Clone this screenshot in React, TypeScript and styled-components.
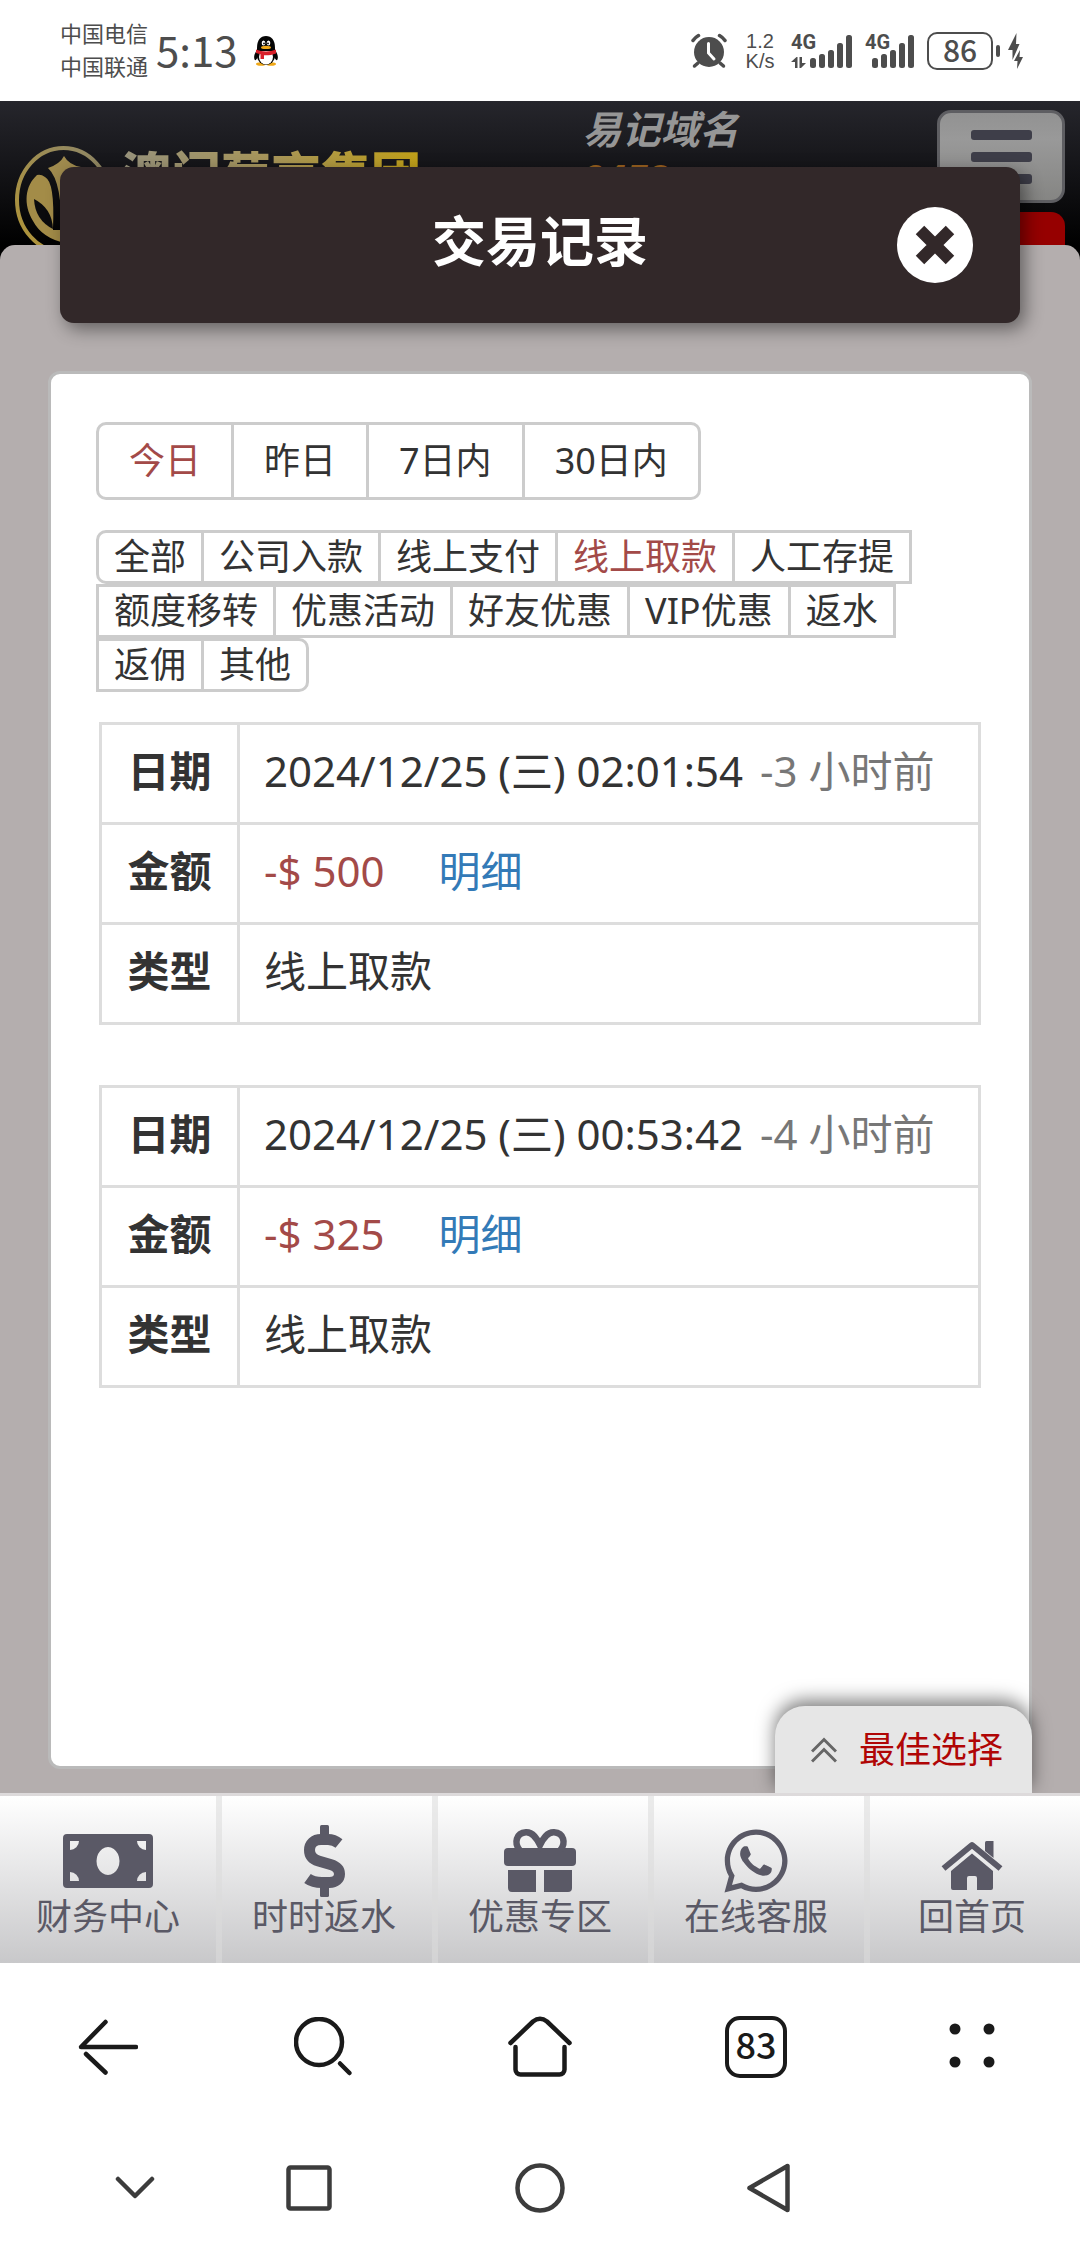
import React, { useState } from 'react';
import styled, { createGlobalStyle } from 'styled-components';
import { FaWhatsapp } from 'react-icons/fa';

const CJK = '"Noto Sans CJK SC", sans-serif';

const GlobalStyle = createGlobalStyle`
  *, *::before, *::after { box-sizing: border-box; }
  body {
    margin: 0;
    background: #fff;
    color: #333;
    font-family: "Noto Sans", ${CJK};
  }
  button { font: inherit; color: inherit; border: 0; padding: 0; margin: 0; background: none; cursor: pointer; }
  a { color: inherit; text-decoration: none; }
  svg { display: block; }
`;

const Screen = styled.div`
  display: flex;
  flex-direction: column;
  min-height: 100vh;
`;

/* ---------- status bar ---------- */

const StatusBar = styled.header`
  display: flex;
  align-items: center;
  justify-content: space-between;
  height: 101px;
  padding: 0 57px 0 60px;
  color: #4d4d4d;
  font-family: ${CJK};
`;

const StatusGroup = styled.div`
  display: flex;
  align-items: center;
  gap: 8px;
`;

const Carriers = styled.div`
  padding-bottom: 4px;
  font-size: 22px;
  line-height: 33px;
`;

const Clock = styled.time`
  padding-bottom: 4px;
  font-size: 42px;
  line-height: 48px;
`;

const Penguin = styled.svg`
  margin-left: 8px;
`;

const Speed = styled.div`
  width: 40px;
  font-family: "Liberation Sans", sans-serif;
  font-size: 20px;
  line-height: 20px;
`;

const SpeedLine = styled.div`
  width: 34px;
  text-align: center;
`;

const Signal = styled.div`
  display: grid;
  height: 34px;
  > * { grid-area: 1 / 1; }
`;

const SignalLabel = styled.span`
  font-family: Roboto, sans-serif;
  font-size: 20px;
  font-weight: 700;
  line-height: 16px;
`;

const Battery = styled.div`
  display: flex;
  align-items: center;
  gap: 3px;
`;

const BatteryBody = styled.span`
  width: 66px;
  height: 38px;
  border: 2px solid #4d4d4d;
  border-radius: 10px;
  font-size: 30px;
  font-weight: 500;
  line-height: 30px;
  text-align: center;
`;

const BatteryNub = styled.i`
  width: 4px;
  height: 12px;
  border-radius: 2px;
  background: #4d4d4d;
`;

/* ---------- page under the dialog ---------- */

const Page = styled.main`
  position: relative;
  flex: 1;
  display: grid;
  > * { grid-area: 1 / 1; min-width: 0; }
`;

const Backdrop = styled.div`
  display: flex;
  flex-direction: column;
  background: #000;
`;

const SiteHeader = styled.div`
  display: grid;
  grid-template-columns: 8fr 5fr 128px;
  height: 144px;
  padding: 0 15px;
  overflow: hidden;
  background: linear-gradient(#26262c, #17171b 40%, #000);
`;

const Sheet = styled.div`
  flex: 1;
  border-radius: 15px 15px 0 0;
  background: #b4aeae;
`;

const Brand = styled.div`
  display: flex;
  gap: 9px;
  padding-top: 45px;
`;

const BrandName = styled.span`
  font-family: ${CJK};
  font-size: 50px;
  font-weight: 900;
  line-height: 52px;
  color: transparent;
  background: linear-gradient(90deg, #98937c, #a8965a 50%, #c0a018);
  background-clip: text;
  -webkit-background-clip: text;
  white-space: nowrap;
`;

const Domain = styled.div`
  display: flex;
  flex-direction: column;
  gap: 8px;
  padding-top: 10px;
  font-family: "Liberation Sans", ${CJK};
  font-size: 39px;
  font-weight: 700;
  font-style: italic;
  line-height: 40px;
  color: #969696;
`;

const DomainNumber = styled.span`
  color: #98601f;
`;

const HeaderActions = styled.div`
  display: flex;
  flex-direction: column;
  gap: 9px;
  padding-top: 9px;
`;

const MenuButton = styled.button`
  display: flex;
  flex: none;
  flex-direction: column;
  align-items: center;
  justify-content: center;
  gap: 12px;
  height: 93px;
  border: 3px solid #5e5e62;
  border-radius: 14px;
  background: linear-gradient(#929292, #999 30%, #858583);
`;

const MenuBar = styled.i`
  width: 61px;
  height: 10px;
  border-radius: 3px;
  background: #3e3e49;
`;

const AccountButton = styled.button`
  flex: none;
  height: 70px;
  border-radius: 14px;
  background: #960000;
`;

/* ---------- dialog ---------- */

const Dialog = styled.section`
  display: flex;
  flex-direction: column;
  gap: 48px;
  padding: 66px 48px 24px;
`;

const DialogHeader = styled.div`
  display: grid;
  grid-template-columns: 1fr auto 1fr;
  align-items: center;
  height: 156px;
  margin: 0 12px;
  padding: 0 47px;
  border-radius: 14px;
  background: #322829;
  box-shadow: 5px 6px 18px rgba(0, 0, 0, 0.45);
`;

const DialogTitle = styled.h1`
  grid-column: 2;
  margin: 0;
  padding-bottom: 8px;
  font-size: 54px;
  font-weight: 700;
  line-height: 72px;
  color: #fff;
`;

const CloseButton = styled.button`
  justify-self: end;
  width: 76px;
  height: 76px;
  border-radius: 50%;
  background: #fff;
`;

const Panel = styled.div`
  flex: 1;
  display: flex;
  flex-direction: column;
  align-items: stretch;
  gap: 30px;
  padding: 48px 45px;
  border: 3px solid #bababa;
  border-radius: 12px;
  background: #fff;
`;

const Tabs = styled.div`
  display: flex;
  flex-wrap: wrap;
  padding-right: 3px;
`;

const Tab = styled.button<{ $active: boolean; $size: 'large' | 'small' }>`
  margin-right: -3px;
  padding: 0 ${(p) => (p.$size === 'large' ? 30 : 15)}px;
  border: 3px solid #ccc;
  font-size: 36px;
  line-height: ${(p) => (p.$size === 'large' ? 72 : 48)}px;
  white-space: nowrap;
  color: ${(p) => (p.$active ? '#a34a48' : '#333')};
  &:first-child { border-radius: 10px 0 0 10px; }
  &:last-child { border-radius: 0 10px 10px 0; }
`;

const Records = styled.div`
  display: flex;
  flex-direction: column;
  gap: 60px;
  padding: 0 3px;
`;

const RecordTable = styled.table`
  width: 100%;
  border-collapse: collapse;
  font-size: 42px;
  line-height: 60px;
`;

const Label = styled.th`
  width: 138px;
  padding: 16px 0 21px;
  border: 3px solid #ddd;
  font-weight: 700;
  text-align: center;
`;

const Value = styled.td`
  padding: 16px 0 21px 24px;
  border: 3px solid #ddd;
  white-space: nowrap;
`;

const Ago = styled.span`
  margin-left: 6px;
  color: #777;
`;

const Amount = styled.span`
  margin-right: 54px;
  color: #a34a48;
`;

const DetailLink = styled.a`
  color: #337ab7;
`;

const BestChoice = styled.button`
  position: absolute;
  right: 48px;
  bottom: 0;
  display: flex;
  align-items: center;
  gap: 22px;
  height: 87px;
  padding: 0 29px 0 36px;
  border-radius: 30px 30px 0 0;
  background: #e6e6e6;
  box-shadow: 0 -6px 18px rgba(0, 0, 0, 0.5);
  clip-path: inset(-30px -30px 0 -30px);
  color: #b00505;
  font-size: 36px;
  line-height: 48px;
`;

/* ---------- site navigation ---------- */

const SiteNav = styled.nav`
  display: grid;
  grid-template-columns: repeat(5, 1fr);
  height: 170px;
  border-top: 3px solid #dddadb;
  background: linear-gradient(#fff, #c8c8ca);
`;

const SiteNavItem = styled.a`
  display: flex;
  flex-direction: column;
  align-items: center;
  padding-top: 29px;
  color: #5a5966;
  font-size: 36px;
  line-height: 40px;
  & + & { box-shadow: inset 6px 0 0 rgba(220, 220, 220, 0.56); }
`;

/* ---------- browser and system bars ---------- */

const BrowserBar = styled.nav`
  display: grid;
  grid-template-columns: repeat(5, 1fr);
  place-items: center;
  height: 168px;
  color: #1a1a1a;
`;

const TabCount = styled.span`
  display: block;
  width: 62px;
  height: 62px;
  border: 4px solid #1a1a1a;
  border-radius: 15px;
  font-family: ${CJK};
  font-size: 36px;
  font-weight: 500;
  line-height: 46px;
  text-align: center;
`;

const SystemBar = styled.nav`
  display: grid;
  grid-template-columns: 8fr 29fr 29fr 48fr 28fr 38fr;
  place-items: center;
  height: 113px;
  color: #3c3c3c;
  > :first-child { grid-column-start: 2; }
`;

/* ---------- drawings ---------- */

const QQIcon = () => (
  <Penguin width="24" height="30" viewBox="0 0 24 30" role="img" aria-label="QQ">
    <ellipse cx="7" cy="28" rx="5" ry="1.8" fill="#f0a818" />
    <ellipse cx="17" cy="28" rx="5" ry="1.8" fill="#f0a818" />
    <path d="M3 14C0 18-.5 22 .8 24c1 .6 2-1 2.700-2.500h17C21.200 23 22.200 24.600 23.200 24c1.300-2 .8-6-2.200-10z" fill="#050505" />
    <ellipse cx="12" cy="20" rx="9" ry="9" fill="#050505" />
    <ellipse cx="12" cy="21" rx="7" ry="7.400" fill="#fff" />
    <path d="M3 12C3 4 6.500 0 12 0s9 4 9 12v3H3z" fill="#050505" />
    <path d="M2 13.500c6 2.600 14 2.600 20 0v4c-4 1.500-8 2-12 1.800V23H6.500v-4.800L2 17z" fill="#d8202a" />
    <ellipse cx="9.500" cy="7" rx="1.800" ry="2.600" fill="#fff" />
    <ellipse cx="14.500" cy="7" rx="1.800" ry="2.600" fill="#fff" />
    <circle cx="10" cy="7.400" r="0.900" />
    <circle cx="14" cy="7.400" r="0.900" />
    <ellipse cx="12" cy="11.400" rx="5" ry="1.700" fill="#f0a818" />
  </Penguin>
);

const AlarmIcon = () => (
  <svg width="44" height="36" viewBox="0 0 44 36" fill="none" stroke="currentColor" strokeLinecap="round">
    <circle cx="18" cy="19" r="15" fill="currentColor" stroke="none" />
    <path d="M2 7.500Q4 4.500 7.500 2.500M34 7.500Q32 4.500 28.500 2.500" strokeWidth="3.500" />
    <path d="M7 30l-3.500 3M29 30l3.500 3" strokeWidth="3.500" />
    <path d="M17.500 10.500v9.500l5.500 6" stroke="#fff" strokeWidth="3" />
  </svg>
);

const barHeights = [10, 14, 18, 25, 33];

const SignalBars = ({ width, start, arrows }: { width: number; start: number; arrows?: boolean }) => (
  <svg width={width} height="34" viewBox={`0 0 ${width} 34`} fill="currentColor">
    {barHeights.map((h, i) => (
      <rect key={h} x={start + i * 9} y={34 - h} width="6" height={h} rx="2.500" />
    ))}
    {arrows && <path d="M4 34V28H0l5.500-5H6.500V34zM8.500 23H11v6h4l-5 5H8.500z" />}
  </svg>
);

const BoltIcon = () => (
  <svg width="15" height="36" viewBox="0 0 15 36" fill="currentColor">
    <path d="M8.500 0L0 17h4.500L4.500 27 11.500 11H8z" />
    <path d="M12 17L6 28h3.500l-.5 8 6-12h-3.500z" />
  </svg>
);

const BrandMark = () => (
  <svg width="97" height="108" viewBox="0 0 97 108">
    <defs>
      <linearGradient id="gold" x1="1" y1="0" x2="0" y2="1">
        <stop offset="0" stopColor="#8d866a" />
        <stop offset="1" stopColor="#b29535" />
      </linearGradient>
    </defs>
    <ellipse cx="48.500" cy="54" rx="46.500" ry="52" fill="none" stroke="url(#gold)" strokeWidth="4" />
    <path d="M49 10Q54 19 66 21L60 40 60 90H46Q48 36 33 22 45 18 49 10z" fill="#a08b4e" />
    <path d="M22 29C10 40 8 58 18 75Q27 92 50 97V84H38V82Q40 36 30 31 26 28 22 29z" fill="#a38c48" />
    <path d="M19 53Q37 62 38 83 20 74 19 53z" fill="#0b0b0d" />
  </svg>
);

const CrossIcon = () => (
  <svg width="76" height="76" viewBox="0 0 76 76">
    <path d="M23 23L53 53M53 23L23 53" stroke="#322829" strokeWidth="12" />
  </svg>
);

const ChevronsUp = () => (
  <svg width="26" height="26" viewBox="0 0 26 26" fill="none" stroke="#666" strokeWidth="3">
    <path d="M1 14.500L13 2.500l12 12M1 24.500l12-12 12 12" />
  </svg>
);

const MoneyIcon = () => (
  <svg width="90" height="72" viewBox="0 0 90 72" fill="currentColor">
    <path
      fillRule="evenodd"
      d="M4 9H86a4 4 0 0 1 4 4V59a4 4 0 0 1-4 4H4a4 4 0 0 1-4-4V13a4 4 0 0 1 4-4zM7 16v9a9 9 0 0 0 9-9zM83 16h-9a9 9 0 0 0 9 9zM7 56h9a9 9 0 0 0-9-9zM83 56v-9a9 9 0 0 0-9 9zM45 22a11.500 14 0 1 0 .01 0z"
    />
  </svg>
);

const DollarIcon = () => (
  <svg width="90" height="72" viewBox="0 0 90 72" fill="none" stroke="currentColor">
    <rect x="41" y="0" width="9" height="14" rx="1.500" fill="currentColor" stroke="none" />
    <rect x="41" y="58" width="9" height="14" rx="1.500" fill="currentColor" stroke="none" />
    <path
      d="M60 18.500Q55 14.500 49 14.500H42C35 14.500 30.500 19 30.500 25c0 6 4 9.500 9 11l12 3.500c5 1.500 9 4.500 9 9.500 0 5-4 8.500-10 8.500H43Q34 57.500 28.500 53.500"
      strokeWidth="11"
    />
  </svg>
);

const GiftIcon = () => (
  <svg width="90" height="72" viewBox="0 0 90 72" fill="currentColor">
    <rect x="9" y="23" width="72" height="18" rx="4" />
    <path d="M13 45H41V67H17a4 4 0 0 1-4-4zM49 45H77V63a4 4 0 0 1-4 4H49z" />
    <path
      d="M24.500 25C19 18 21 8 31 7.300 38 7 42 14 45 20 48 14 52 7 59 7.300 69 8 71 18 65.500 25"
      fill="none"
      stroke="currentColor"
      strokeWidth="6.500"
    />
  </svg>
);

const HouseIcon = () => (
  <svg width="90" height="72" viewBox="0 0 90 72" fill="currentColor">
    <path d="M58 17.500a1.500 1.500 0 0 1 1.500-1.500h7V33l-8.500-7z" />
    <path d="M16.500 43.500L45 20l28.500 23.500" fill="none" stroke="currentColor" strokeWidth="6" strokeLinejoin="round" />
    <path d="M45 28.500L66 46V63a2 2 0 0 1-2 2H50V53a2 2 0 0 0-2-2H42a2 2 0 0 0-2 2V65H26a2 2 0 0 1-2-2V46z" />
  </svg>
);

const line = { fill: 'none', stroke: 'currentColor', strokeWidth: 4.5, strokeLinecap: 'round', strokeLinejoin: 'round' } as const;

const BackArrow = () => (
  <svg width="60" height="60" viewBox="0 0 60 60" {...line}>
    <path d="M58 30H3L27.500 5M8 37L27.500 55.500" />
  </svg>
);

const SearchIcon = () => (
  <svg width="60" height="60" viewBox="0 0 60 60" {...line}>
    <circle cx="25" cy="25" r="23" />
    <path d="M46 46.500l9.500 9.500" />
  </svg>
);

const BrowserHome = () => (
  <svg width="64" height="64" viewBox="0 0 64 64" {...line}>
    <path d="M2.500 28L25 6.500Q32 1 39 6.500L61.500 28" />
    <path d="M7.500 32V54.500a5 5 0 0 0 5 5h39a5 5 0 0 0 5-5V32" />
  </svg>
);

const DotsIcon = () => (
  <svg width="48" height="48" viewBox="0 0 48 48" fill="currentColor">
    <circle cx="7" cy="6" r="5.500" />
    <circle cx="41" cy="6" r="5.500" />
    <circle cx="7" cy="39" r="5.500" />
    <circle cx="41" cy="39" r="5.500" />
  </svg>
);

/* ---------- data ---------- */

const dateTabs = ['今日', '昨日', '7日内', '30日内'];
const typeTabs = ['全部', '公司入款', '线上支付', '线上取款', '人工存提', '额度移转', '优惠活动', '好友优惠', 'VIP优惠', '返水', '返佣', '其他'];

const records = [
  { date: '2024/12/25 (三) 02:01:54', ago: '-3 小时前', amount: '-$ 500', type: '线上取款' },
  { date: '2024/12/25 (三) 00:53:42', ago: '-4 小时前', amount: '-$ 325', type: '线上取款' },
];

const siteNav = [
  { label: '财务中心', icon: <MoneyIcon /> },
  { label: '时时返水', icon: <DollarIcon /> },
  { label: '优惠专区', icon: <GiftIcon /> },
  { label: '在线客服', icon: <FaWhatsapp size={72} /> },
  { label: '回首页', icon: <HouseIcon /> },
];

interface TabGroupProps {
  items: string[];
  size: 'large' | 'small';
  value: string;
  onChange: (value: string) => void;
}

const TabGroup = ({ items, size, value, onChange }: TabGroupProps) => (
  <Tabs>
    {items.map((item) => (
      <Tab key={item} type="button" $size={size} $active={item === value} aria-pressed={item === value} onClick={() => onChange(item)}>
        {item}
      </Tab>
    ))}
  </Tabs>
);

export default function App() {
  const [range, setRange] = useState('今日');
  const [kind, setKind] = useState('线上取款');

  return (
    <Screen>
      <GlobalStyle />
      <StatusBar>
        <StatusGroup>
          <Carriers>
            <div>中国电信</div>
            <div>中国联通</div>
          </Carriers>
          <Clock>5:13</Clock>
          <QQIcon />
        </StatusGroup>
        <StatusGroup>
          <AlarmIcon />
          <Speed>
            <SpeedLine>1.2</SpeedLine>
            <SpeedLine>K/s</SpeedLine>
          </Speed>
          <Signal>
            <SignalLabel>4G</SignalLabel>
            <SignalBars width={66} start={19} arrows />
          </Signal>
          <Signal>
            <SignalLabel>4G</SignalLabel>
            <SignalBars width={54} start={7} />
          </Signal>
          <Battery>
            <BatteryBody>86</BatteryBody>
            <BatteryNub />
          </Battery>
          <BoltIcon />
        </StatusGroup>
      </StatusBar>

      <Page>
        <Backdrop>
          <SiteHeader>
            <Brand>
              <BrandMark />
              <BrandName>澳门葡京集团</BrandName>
            </Brand>
            <Domain>
              <span>易记域名</span>
              <DomainNumber>9453</DomainNumber>
            </Domain>
            <HeaderActions>
              <MenuButton type="button" aria-label="菜单">
                <MenuBar />
                <MenuBar />
                <MenuBar />
              </MenuButton>
              <AccountButton type="button" aria-label="账户" />
            </HeaderActions>
          </SiteHeader>
          <Sheet />
        </Backdrop>

        <Dialog role="dialog" aria-labelledby="dialog-title">
          <DialogHeader>
            <DialogTitle id="dialog-title">交易记录</DialogTitle>
            <CloseButton type="button" aria-label="关闭">
              <CrossIcon />
            </CloseButton>
          </DialogHeader>
          <Panel>
            <TabGroup items={dateTabs} size="large" value={range} onChange={setRange} />
            <TabGroup items={typeTabs} size="small" value={kind} onChange={setKind} />
            <Records>
              {records.map((r) => (
                <RecordTable key={r.date}>
                  <tbody>
                    <tr>
                      <Label scope="row">日期</Label>
                      <Value>
                        {r.date} <Ago>{r.ago}</Ago>
                      </Value>
                    </tr>
                    <tr>
                      <Label scope="row">金额</Label>
                      <Value>
                        <Amount>{r.amount}</Amount>
                        <DetailLink href="#detail">明细</DetailLink>
                      </Value>
                    </tr>
                    <tr>
                      <Label scope="row">类型</Label>
                      <Value>{r.type}</Value>
                    </tr>
                  </tbody>
                </RecordTable>
              ))}
            </Records>
          </Panel>
        </Dialog>

        <BestChoice type="button">
          <ChevronsUp />
          最佳选择
        </BestChoice>
      </Page>

      <SiteNav>
        {siteNav.map((item) => (
          <SiteNavItem key={item.label} href="#">
            {item.icon}
            {item.label}
          </SiteNavItem>
        ))}
      </SiteNav>

      <BrowserBar>
        <button type="button" aria-label="后退"><BackArrow /></button>
        <button type="button" aria-label="搜索"><SearchIcon /></button>
        <button type="button" aria-label="主页"><BrowserHome /></button>
        <button type="button"><TabCount>83</TabCount></button>
        <button type="button" aria-label="更多"><DotsIcon /></button>
      </BrowserBar>

      <SystemBar>
        <button type="button" aria-label="收起">
          <svg width="40" height="24" viewBox="0 0 40 24" {...line}>
            <path d="M3 3l17 17L37 3" />
          </svg>
        </button>
        <button type="button" aria-label="最近任务">
          <svg width="46" height="46" viewBox="0 0 46 46" {...line}>
            <rect x="2.500" y="2.500" width="41" height="41" rx="2" />
          </svg>
        </button>
        <button type="button" aria-label="桌面">
          <svg width="50" height="50" viewBox="0 0 50 50" {...line}>
            <circle cx="25" cy="25" r="22.500" />
          </svg>
        </button>
        <button type="button" aria-label="返回">
          <svg width="43" height="50" viewBox="0 0 43 50" {...line}>
            <path d="M40.500 3V47L2.500 25z" />
          </svg>
        </button>
      </SystemBar>
    </Screen>
  );
}
